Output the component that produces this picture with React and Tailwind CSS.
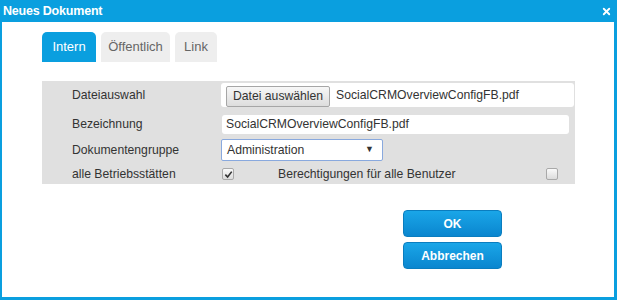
// App.jsx
import { X } from "lucide-react";

function Checkbox({ checked }) {
  return (
    <span className="flex h-[12px] w-[12px] items-center justify-center rounded-[2px] border border-[#a9a9a9] bg-gradient-to-b from-[#fafafa] to-[#dcdcdc]">
      {checked && (
        <svg width="9" height="9" viewBox="0 0 10 10">
          <path d="M1.5 5.2 L4 7.8 L8.6 1.8" fill="none" stroke="#333" strokeWidth="1.8" />
        </svg>
      )}
    </span>
  );
}

export default function App() {
  return (
    <div
      className="flex h-[300px] w-[617px] flex-col border-b-[3px] border-l-2 border-r-[3px] border-[#0a9fdf] bg-white text-[#333]"
      style={{ fontFamily: '"Liberation Sans", Arial, sans-serif' }}
    >
      <header className="-ml-[2px] -mr-[3px] flex h-[22px] items-center justify-between bg-[#0a9fdf] pl-[3px] pr-[5px] text-white">
        <span className="text-[12.5px] font-bold tracking-[-0.2px]">Neues Dokument</span>
        <X size={11} strokeWidth={4} />
      </header>

      <main className="flex flex-1 flex-col pl-[40px]">
        <nav className="mt-[10px] flex h-[30px] gap-[4px] text-[13px]">
          <div className="flex w-[54px] items-center justify-center rounded-t-[5px] bg-[#0a9fdf] text-white">Intern</div>
          <div className="ml-[1px] flex w-[69px] items-center justify-center rounded-t-[5px] bg-[#eeeeee] text-[#666]">Öffentlich</div>
          <div className="ml-[1px] flex w-[42px] items-center justify-center rounded-t-[5px] bg-[#eeeeee] text-[#666]">Link</div>
        </nav>

        <section className="mt-[19px] flex h-[103px] w-[533px] flex-col bg-[#e0e0e0] pl-[30px] pt-[2px] text-[12.2px]">
          <div className="flex h-[24px] items-center">
            <span className="w-[149px]">Dateiauswahl</span>
            <div className="flex h-[24px] w-[353px] items-end rounded-[3px] bg-white pl-[5px]">
              <span className="flex h-[21px] items-center rounded-[2px] border border-[#a6a6a6] bg-gradient-to-b from-[#f7f7f7] to-[#dddddd] px-[6px]">Datei auswählen</span>
              <span className="mb-[3px] ml-[6px]">SocialCRMOverviewConfigFB.pdf</span>
            </div>
          </div>
          <div className="mt-[7px] flex h-[20px] items-center">
            <span className="w-[150px]">Bezeichnung</span>
            <div className="flex h-[19px] w-[347px] items-center rounded-[3px] bg-white pl-[4px]">SocialCRMOverviewConfigFB.pdf</div>
          </div>
          <div className="mt-[5px] flex h-[22px] items-center">
            <span className="w-[149px]">Dokumentengruppe</span>
            <div className="flex h-[22px] w-[162px] items-center justify-between rounded-[2px] border border-[#89a9de] bg-white pl-[5px] pr-[8px]">
              <span>Administration</span>
              <span className="text-[9px]">▼</span>
            </div>
          </div>
          <div className="mt-[4px] flex h-[18px] items-center">
            <span className="w-[150px]">alle Betriebsstätten</span>
            <Checkbox checked />
            <span className="ml-[44px] w-[268px]">Berechtigungen für alle Benutzer</span>
            <Checkbox />
          </div>
        </section>

        <div className="ml-[361px] mt-[26px] flex w-[99px] flex-col gap-[5px] text-[12px] font-bold text-white">
          <button className="h-[27px] rounded-[4px] border border-[#0a7dbf] bg-gradient-to-b from-[#1aa6e8] to-[#0a86cf]">OK</button>
          <button className="h-[27px] rounded-[4px] border border-[#0a7dbf] bg-gradient-to-b from-[#1aa6e8] to-[#0a86cf]">Abbrechen</button>
        </div>
      </main>
    </div>
  );
}
